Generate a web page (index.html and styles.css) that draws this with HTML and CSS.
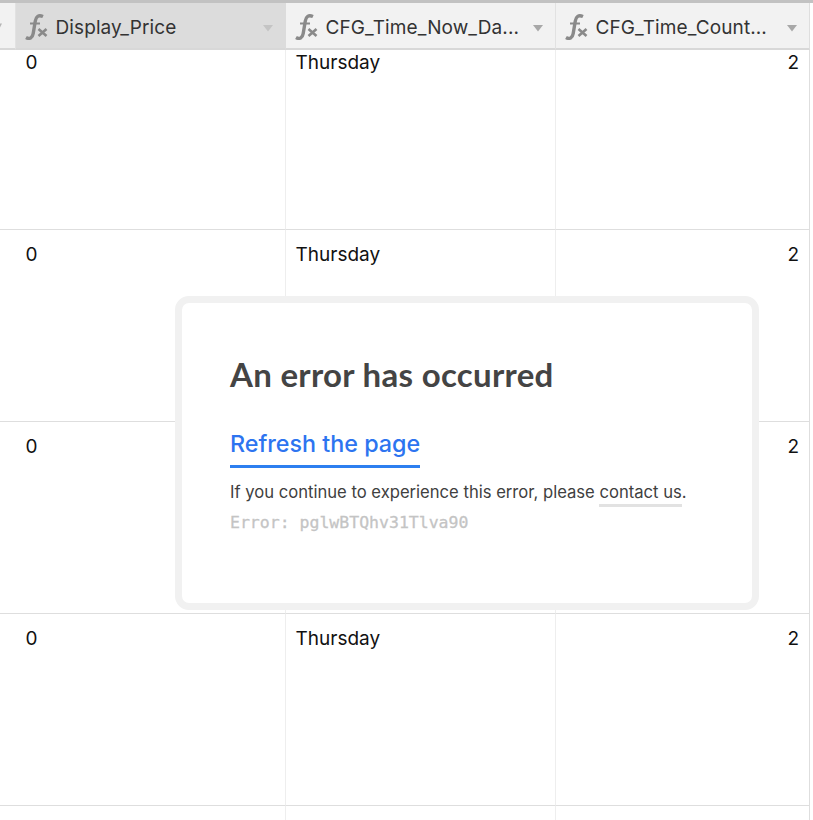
FILE: index.html
```html
<!DOCTYPE html>
<html lang="en">
<head>
<meta charset="utf-8">
<title>Error</title>
<link rel="stylesheet" href="styles.css">
</head>
<body>
<div class="page">
  <div class="table">
    <div class="head-cell lead"><svg class="lead-caret" width="6" height="8" viewBox="0 0 6 8"><path d="M0 1.500h5L2.500 6.500z" fill="#b5b5b5"/></svg></div>
    <div class="head-cell active">
      <svg class="fx" width="24" height="26" viewBox="0 0 24 26"><path d="M18 2.500C13.500 .5 11 2.500 10.300 7L8.200 19.500C7.500 24 4.500 25.500 1 23.500" fill="none" stroke="#8a8a8a" stroke-width="3.400"/><path d="M5 9.500h10" stroke="#8a8a8a" stroke-width="2"/><path d="M13.500 15l8 7m0-7l-8 7" stroke="#8a8a8a" stroke-width="2.600" fill="none"/></svg>
      <span class="name">Display_Price</span>
      <svg class="caret" width="12" height="8" viewBox="0 0 12 8"><path d="M1 1h10L6 7.500z" fill="#c4c4c4"/></svg>
    </div>
    <div class="head-cell">
      <svg class="fx" width="24" height="26" viewBox="0 0 24 26"><path d="M18 2.500C13.500 .5 11 2.500 10.300 7L8.200 19.500C7.500 24 4.500 25.500 1 23.500" fill="none" stroke="#8a8a8a" stroke-width="3.400"/><path d="M5 9.500h10" stroke="#8a8a8a" stroke-width="2"/><path d="M13.500 15l8 7m0-7l-8 7" stroke="#8a8a8a" stroke-width="2.600" fill="none"/></svg>
      <span class="name">CFG_Time_Now_Da...</span>
      <svg class="caret" width="12" height="8" viewBox="0 0 12 8"><path d="M1 1h10L6 7.500z" fill="#a8a8a8"/></svg>
    </div>
    <div class="head-cell last">
      <svg class="fx" width="24" height="26" viewBox="0 0 24 26"><path d="M18 2.500C13.500 .5 11 2.500 10.300 7L8.200 19.500C7.500 24 4.500 25.500 1 23.500" fill="none" stroke="#8a8a8a" stroke-width="3.400"/><path d="M5 9.500h10" stroke="#8a8a8a" stroke-width="2"/><path d="M13.500 15l8 7m0-7l-8 7" stroke="#8a8a8a" stroke-width="2.600" fill="none"/></svg>
      <span class="name">CFG_Time_Count...</span>
      <svg class="caret" width="12" height="8" viewBox="0 0 12 8"><path d="M1 1h10L6 7.500z" fill="#a8a8a8"/></svg>
    </div>

    <div class="cell first-row"></div><div class="cell first-row">0</div><div class="cell first-row">Thursday</div><div class="cell first-row num last">2</div>
    <div class="cell"></div><div class="cell">0</div><div class="cell">Thursday</div><div class="cell num last">2</div>
    <div class="cell"></div><div class="cell">0</div><div class="cell"></div><div class="cell num last">2</div>
    <div class="cell"></div><div class="cell">0</div><div class="cell">Thursday</div><div class="cell num last">2</div>
    <div class="cell"></div><div class="cell"></div><div class="cell"></div><div class="cell last"></div>
  </div>

  <div class="modal">
    <h1 class="title">An error has occurred</h1>
    <a class="refresh" href="#">Refresh the page</a>
    <p class="help">If you continue to experience this error, please <a class="contact" href="#">contact us</a>.</p>
    <p class="code">Error: pglwBTQhv31Tlva90</p>
  </div>
</div>
</body>
</html>
```

FILE: styles.css
```css
* { box-sizing: border-box; }
html, body { margin: 0; padding: 0; height: 100%; }
body { background: #fff; font-family: Inter, "Liberation Sans", sans-serif; overflow: hidden; }
.page { position: relative; width: 813px; height: 820px; overflow: hidden; border-top: 3px solid #c2c2c2; }
.table {
  display: grid;
  grid-template-columns: 16px 270px 270px 254px;
  grid-template-rows: 47px 180px 192px 192px 192px 192px;
}
.head-cell {
  display: flex;
  align-items: center;
  padding: 4px 10px 0;
  background: #f2f2f2;
  border-right: 1px solid #e2e2e2;
  border-bottom: 2px solid #d8d8d8;
  font-size: 19px;
  letter-spacing: 0.1px;
  color: #333;
}
.head-cell.lead { padding: 0; }
.head-cell.active { background: #dcdcdc; border-right-color: #dcdcdc; }
.head-cell.last { border-right-color: #dedede; }
.lead-caret { display: block; margin-left: -3px; }
.fx { flex: none; margin-right: 6.500px; margin-top: -2px; margin-left: -1px; }
.name { flex: 1; white-space: nowrap; }
.caret { flex: none; margin-right: 1.500px; }
.cell {
  padding: 1px 10px 0 9.500px;
  border-right: 1px solid #eeeeee;
  border-bottom: 1px solid #dedede;
  font-size: 19px;
  line-height: 24px;
  color: #111;
  background: #fff;
}
.cell:not(.first-row) { padding-top: 13px; }
.cell.last { border-right-color: #dedede; }
.num { text-align: right; }
.modal {
  position: absolute;
  left: 175px;
  top: 293px;
  width: 584px;
  height: 314px;
  padding: 51px 48px 0;
  background: #fff;
  border: 7px solid #f1f1f1;
  border-radius: 14px;
}
.title { margin: 0; font-family: Lato, sans-serif; font-size: 33px; line-height: 40px; font-weight: 700; letter-spacing: 0.3px; color: #444; }
.refresh {
  display: inline-block;
  margin-top: 35px;
  padding-bottom: 6px;
  border-bottom: 3px solid #2d7ff0;
  font-size: 23.300px;
  line-height: 30px;
  font-weight: 500;
  color: #2d74f0;
  text-decoration: none;
}
.help { margin: 12px 0 0; font-size: 16.630px; line-height: 24px; color: #404040; }
.contact { color: #404040; text-decoration: none; border-bottom: 3px solid #e2e2e2; padding-bottom: 2px; }
.code { margin: 7px 0 0; font-family: "DejaVu Sans Mono", monospace; font-size: 16.500px; line-height: 24px; -webkit-text-stroke: 0.3px #c4c4c4; color: #c4c4c4; }
```
